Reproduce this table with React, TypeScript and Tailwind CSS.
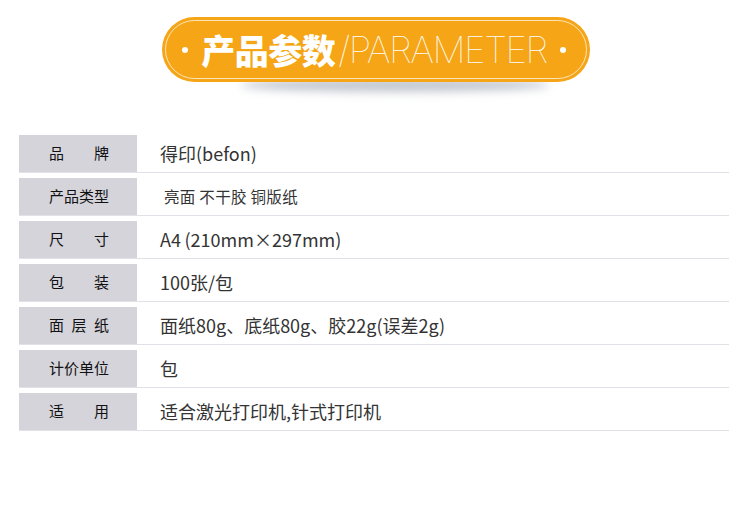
import React from 'react';

const rows: { label: string[]; value: string; small?: boolean }[] = [
  { label: ['品', '牌'], value: '得印(befon)' },
  { label: ['产', '品', '类', '型'], value: '亮面 不干胶 铜版纸', small: true },
  { label: ['尺', '寸'], value: 'A4\u2009(210mm\u00d7297mm)' },
  { label: ['包', '装'], value: '100张/包' },
  { label: ['面', '层', '纸'], value: '面纸80g、底纸80g、胶22g(误差2g)' },
  { label: ['计', '价', '单', '位'], value: '包' },
  { label: ['适', '用'], value: '适合激光打印机,针式打印机' },
];

function Banner() {
  return (
    <div className="relative flex justify-center pt-[17px]">
      {/* shadow under the pill */}
      <div className="absolute left-[240px] top-[78px] h-[14px] w-[310px] rounded-[50%] bg-gray-400/60 blur-[5px]" />
      <div className="relative ml-[2px] flex h-[65px] w-[428px] items-center rounded-full bg-[#f5a515] p-[3px]">
        <div className="flex h-full w-full items-center justify-between rounded-full border border-white/70 pl-[16px] pr-[20px]">
          <div className="h-[6px] w-[6px] rounded-full bg-white" />
          <div className="flex items-center text-white">
            <span className="text-[34px] font-black tracking-[-0.5px] [font-family:'Noto_Sans_CJK_SC',sans-serif]">
              产品参数
            </span>
            <span className="ml-[3px] text-[37px] font-thin tracking-[-1.5px] [font-family:Inter,sans-serif]">
              /PARAMETER
            </span>
          </div>
          <div className="h-[6px] w-[6px] rounded-full bg-white" />
        </div>
      </div>
    </div>
  );
}

export default function App() {
  return (
    <div className="h-[507px] w-[750px] overflow-hidden bg-white [font-family:'Noto_Sans_CJK_SC',sans-serif]">
      <Banner />
      <div className="mt-[48px] ml-[19px] w-[710px]">
        {rows.map((r) => (
          <div key={r.value} className="pt-[5px]">
            <div className="flex h-[37px] items-center">
              <div className="flex h-full w-[118px] items-center justify-center bg-[#d5d4db]">
                <div className="ml-[2px] flex w-[60px] justify-between text-[15px] text-[#111]">
                  {r.label.map((c, i) => (
                    <span key={i}>{c}</span>
                  ))}
                </div>
              </div>
              <div
                className={
                  r.small
                    ? 'pl-[27px] text-[15.5px] tracking-[0.3px] text-[#333]'
                    : 'pl-[23px] text-[18px] text-[#333]'
                }
              >
                {r.value}
              </div>
            </div>
            <div className="h-px bg-[#e1e1e7]" />
          </div>
        ))}
      </div>
    </div>
  );
}
